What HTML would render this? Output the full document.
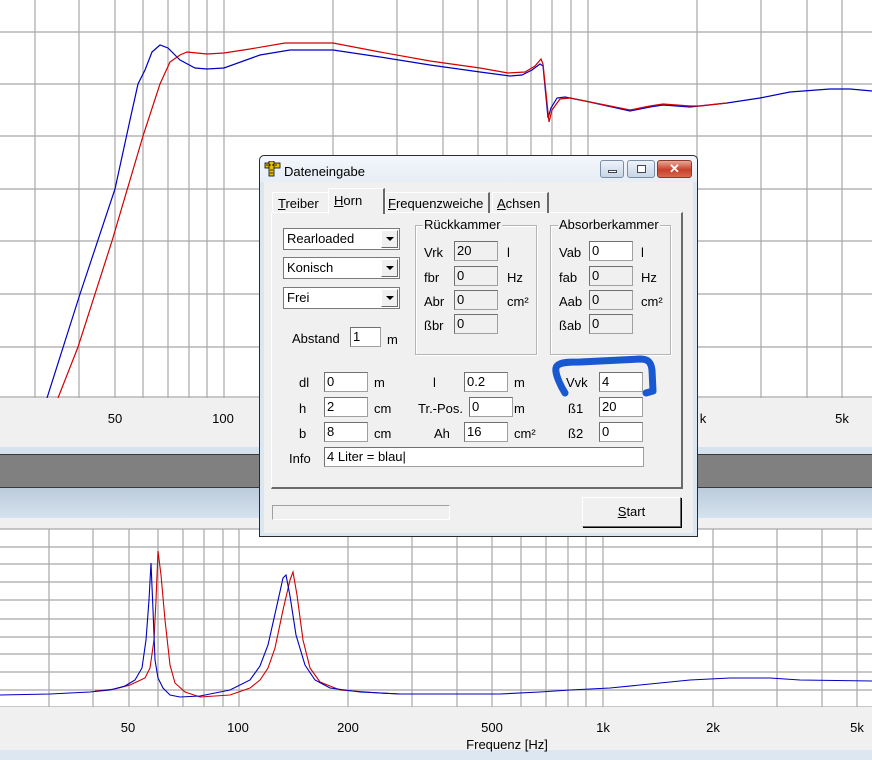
<!DOCTYPE html>
<html><head><meta charset="utf-8"><style>
*{box-sizing:border-box;margin:0;padding:0}
body{width:872px;height:760px;overflow:hidden;position:relative;background:#fff;font-family:"Liberation Sans",sans-serif;font-size:13px;color:#000}
.a{position:absolute}
.lbl{position:absolute;white-space:nowrap;line-height:15px}
.in{position:absolute;height:20px;background:#fff;border:1px solid #a0a0a0;border-top-color:#707070;border-left-color:#707070;font-size:13px;line-height:17px;padding-left:2px}
.g{background:#f0f0f0}
.cb{position:absolute;width:117px;height:22px;background:#fff;border:1px solid #7a7a7a;padding-left:3px;line-height:20px}
.cb .ar{position:absolute;right:1px;top:1px;width:17px;height:18px;background:#f0f0f0;border:1px solid #fff;border-right-color:#696969;border-bottom-color:#696969}
.cb .ar:after{content:"";position:absolute;left:4px;top:6px;border-left:4px solid transparent;border-right:4px solid transparent;border-top:4px solid #000}
.grp{position:absolute;border:1px solid #b5b5b5;box-shadow:inset 1px 1px 0 #fff,1px 1px 0 #fff}
.grp span{position:absolute;top:-9px;left:7px;background:#f0f0f0;padding:0 1px}
u{text-decoration:underline}
</style></head><body>
<svg class="a" style="left:0;top:0" width="872" height="760">
<rect x="0" y="0" width="872" height="398" fill="#fff"/>
<g stroke="#a8a8a8" stroke-width="1.2">
<line x1="0" y1="32" x2="872" y2="32"/><line x1="0" y1="84" x2="872" y2="84"/><line x1="0" y1="136" x2="872" y2="136"/><line x1="0" y1="189" x2="872" y2="189"/><line x1="0" y1="241" x2="872" y2="241"/><line x1="0" y1="294" x2="872" y2="294"/><line x1="0" y1="347" x2="872" y2="347"/><line x1="0" y1="397" x2="872" y2="397"/>
<path d="M35 0V398M79 0V398M115 0V398M143 0V398M168 0V398M189 0V398M207 0V398M224 0V398M333 0V398M397 0V398M443 0V398M478 0V398M507 0V398M531 0V398M552 0V398M571 0V398M588 0V398M697 0V398M761 0V398M807 0V398M842 0V398"/>
</g>
<polyline fill="none" stroke="#0000c0" stroke-width="1.2" points="47,398 80,294 115,189 130,120 138,84 145,70 152,52 160,45 168,48 180,60 195,68 207,69 224,68 260,55 290,50 333,50 380,57 430,65 480,72 510,76 522,75 532,70 540,64 543,66 548,118 551,108 557,98 565,97 585,101 630,111 650,107 663,105 690,107 727,103 760,98 790,92 830,89 850,89 872,91"/>
<polyline fill="none" stroke="#d00000" stroke-width="1.2" points="58,398 78,347 112,241 143,136 160,84 170,62 180,55 187,52 207,54 224,53 250,49 285,43 333,43 380,52 430,61 480,68 508,73 525,72 535,66 541,59 543,64 549,122 552,110 560,99 570,98 585,101 630,110 650,106 663,104 690,106 700,106 727,103"/>
<rect x="0" y="398" width="872" height="49" fill="#f0f0f0"/>
<rect x="0" y="447" width="872" height="7" fill="#d6e2ee"/>
<rect x="0" y="454" width="872" height="34" fill="#808080"/>
<line x1="0" y1="454.5" x2="872" y2="454.5" stroke="#3a3a3a"/><line x1="0" y1="487.5" x2="872" y2="487.5" stroke="#3a3a3a"/>
<defs><linearGradient id="gb" x1="0" y1="0" x2="0" y2="1"><stop offset="0" stop-color="#bccbda"/><stop offset="1" stop-color="#d5e2ef"/></linearGradient></defs>
<rect x="0" y="488" width="872" height="30" fill="url(#gb)"/>
<rect x="0" y="518" width="872" height="12" fill="#f0f0f0"/>
<rect x="0" y="529" width="872" height="178" fill="#fff"/>
<g stroke="#a8a8a8" stroke-width="1.2">
<path d="M0 529H872M0 547H872M0 564H872M0 582H872M0 600H872M0 619H872M0 637H872M0 654H872M0 672H872M0 690H872M0 707H872"/>
<path d="M49 529V707M93 529V707M129 529V707M158 529V707M183 529V707M204 529V707M223 529V707M239 529V707M348 529V707M412 529V707M457 529V707M492 529V707M521 529V707M546 529V707M568 529V707M586 529V707M603 529V707M713 529V707M777 529V707M822 529V707M857 529V707"/>
</g>
<polyline fill="none" stroke="#d00000" stroke-width="1.1" points="95,691 115,689 130,685 145,678 150,668 154,640 156,600 158,551 161,575 165,620 170,665 175,683 185,692 200,697 215,696 230,695 250,688 260,680 268,668 275,648 283,610 290,580 293,572 297,595 303,640 310,668 320,682 340,690 380,693 400,694"/>
<polyline fill="none" stroke="#0000c0" stroke-width="1.1" points="0,695 50,694 90,692 110,690 125,686 135,680 142,668 146,640 149,600 151,563 153,610 155,660 158,678 163,688 170,695 180,697 200,696 230,690 250,680 260,666 268,645 277,605 283,578 286,575 290,596 296,635 305,665 315,680 330,688 360,692 400,694 500,694 540,692 570,690 610,688 650,684 690,680 730,678 770,678 800,680 872,681"/>
<rect x="0" y="707" width="872" height="43" fill="#f0f0f0"/>
<rect x="0" y="750" width="872" height="10" fill="#dde7f1"/>
<g font-family="Liberation Sans" font-size="13" text-anchor="middle" fill="#000">
<text x="115" y="423">50</text><text x="223" y="423">100</text><text x="703" y="423">k</text><text x="842" y="423">5k</text>
<text x="128" y="732">50</text><text x="238" y="732">100</text><text x="348" y="732">200</text><text x="492" y="732">500</text><text x="603" y="732">1k</text><text x="713" y="732">2k</text><text x="857" y="732">5k</text>
<text x="507" y="749">Frequenz [Hz]</text>
</g>
</svg>

<!-- dialog -->
<div class="a" style="left:259px;top:155px;width:439px;height:382px;background:#dae6f2;border:1px solid #2b2b2b;border-radius:5px 5px 0 0"></div>
<div class="a" style="left:260px;top:156px;width:437px;height:26px;background:linear-gradient(#f4f7fb,#e6edf5);border-radius:5px 5px 0 0"></div>
<svg class="a" style="left:264px;top:161px" width="17" height="16"><rect x="1" y="2" width="15" height="5" fill="#e8c000" stroke="#000" stroke-width=".8"/><rect x="5" y="0" width="5" height="15" fill="#e8c000" stroke="#000" stroke-width=".8"/><path d="M3 3v2M6 3v2M9 3v2M12 3v2M6 9h3M6 12h3" stroke="#000" stroke-width=".8"/></svg>
<div class="lbl" style="left:284px;top:164px">Dateneingabe</div>
<div class="a" style="left:600px;top:160px;width:24px;height:18px;border:1px solid #7a8ea5;border-radius:3px;background:linear-gradient(#eef3f9,#c6d5e6)"><div class="a" style="left:7px;top:9px;width:9px;height:3px;border:1px solid #445;background:#fff"></div></div>
<div class="a" style="left:627px;top:160px;width:28px;height:18px;border:1px solid #7a8ea5;border-radius:3px;background:linear-gradient(#eef3f9,#c6d5e6)"><div class="a" style="left:9px;top:4px;width:9px;height:8px;border:1px solid #445;background:#fff"></div></div>
<div class="a" style="left:657px;top:160px;width:35px;height:18px;border:1px solid #8a3a2a;border-radius:3px;background:linear-gradient(#e9a898,#c8402a 55%,#d8684e);color:#fff;font-weight:bold;text-align:center;line-height:16px;font-size:13px">✕</div>
<div class="a" style="left:264px;top:182px;width:429px;height:351px;background:#f0f0f0"></div>

<!-- tabs -->
<div class="a" style="left:271px;top:212px;width:412px;height:277px;border:1px solid #fff;border-right:2px solid #696969;border-bottom:2px solid #696969"></div>
<div class="a" style="left:272px;top:192px;width:56px;height:21px;border-top:1px solid #fff;border-left:1px solid #fff"></div>
<div class="lbl" style="left:278px;top:196px"><u>T</u>reiber</div>
<div class="a" style="left:328px;top:188px;width:57px;height:26px;background:#f0f0f0;border-top:1px solid #fff;border-left:1px solid #fff;border-right:2px solid #696969"></div>
<div class="lbl" style="left:334px;top:193px"><u>H</u>orn</div>
<div class="a" style="left:385px;top:192px;width:105px;height:21px;border-top:1px solid #fff;border-left:1px solid #fff;border-right:2px solid #696969"></div>
<div class="lbl" style="left:388px;top:196px"><u>F</u>requenzweiche</div>
<div class="a" style="left:492px;top:192px;width:57px;height:21px;border-top:1px solid #fff;border-left:1px solid #fff;border-right:2px solid #696969"></div>
<div class="lbl" style="left:497px;top:196px"><u>A</u>chsen</div>

<div class="cb" style="left:283px;top:228px">Rearloaded<div class="ar"></div></div>
<div class="cb" style="left:283px;top:257px">Konisch<div class="ar"></div></div>
<div class="cb" style="left:283px;top:287px">Frei<div class="ar"></div></div>
<div class="lbl" style="left:292px;top:331px">Abstand</div>
<div class="in" style="left:350px;top:327px;width:31px">1</div>
<div class="lbl" style="left:387px;top:332px">m</div>

<div class="grp" style="left:415px;top:225px;width:122px;height:130px"><span>Rückkammer</span></div>
<div class="lbl" style="left:424px;top:245px">Vrk</div><div class="in g" style="left:454px;top:241px;width:44px">20</div><div class="lbl" style="left:507px;top:245px">l</div>
<div class="lbl" style="left:424px;top:270px">fbr</div><div class="in g" style="left:454px;top:266px;width:44px">0</div><div class="lbl" style="left:507px;top:270px">Hz</div>
<div class="lbl" style="left:424px;top:294px">Abr</div><div class="in g" style="left:454px;top:290px;width:44px">0</div><div class="lbl" style="left:507px;top:294px">cm²</div>
<div class="lbl" style="left:424px;top:318px">ßbr</div><div class="in g" style="left:454px;top:314px;width:44px">0</div>

<div class="grp" style="left:550px;top:225px;width:121px;height:130px"><span>Absorberkammer</span></div>
<div class="lbl" style="left:559px;top:245px">Vab</div><div class="in" style="left:589px;top:241px;width:44px">0</div><div class="lbl" style="left:641px;top:245px">l</div>
<div class="lbl" style="left:559px;top:270px">fab</div><div class="in g" style="left:589px;top:266px;width:44px">0</div><div class="lbl" style="left:641px;top:270px">Hz</div>
<div class="lbl" style="left:559px;top:294px">Aab</div><div class="in g" style="left:589px;top:290px;width:44px">0</div><div class="lbl" style="left:641px;top:294px">cm²</div>
<div class="lbl" style="left:559px;top:318px">ßab</div><div class="in g" style="left:589px;top:314px;width:44px">0</div>

<div class="lbl" style="left:299px;top:375px">dl</div><div class="in" style="left:324px;top:372px;width:44px">0</div><div class="lbl" style="left:374px;top:375px">m</div>
<div class="lbl" style="left:433px;top:375px">l</div><div class="in" style="left:464px;top:372px;width:44px">0.2</div><div class="lbl" style="left:514px;top:375px">m</div>
<div class="lbl" style="left:566px;top:375px">Vvk</div><div class="in" style="left:599px;top:372px;width:44px">4</div><div class="lbl" style="left:651px;top:375px">l</div>
<div class="lbl" style="left:299px;top:401px">h</div><div class="in" style="left:324px;top:397px;width:44px">2</div><div class="lbl" style="left:374px;top:401px">cm</div>
<div class="lbl" style="left:418px;top:401px">Tr.-Pos.</div><div class="in" style="left:469px;top:397px;width:44px">0</div><div class="lbl" style="left:514px;top:401px">m</div>
<div class="lbl" style="left:568px;top:401px">ß1</div><div class="in" style="left:599px;top:397px;width:44px">20</div>
<div class="lbl" style="left:299px;top:426px">b</div><div class="in" style="left:324px;top:422px;width:44px">8</div><div class="lbl" style="left:374px;top:426px">cm</div>
<div class="lbl" style="left:434px;top:426px">Ah</div><div class="in" style="left:464px;top:422px;width:44px">16</div><div class="lbl" style="left:514px;top:426px">cm²</div>
<div class="lbl" style="left:568px;top:426px">ß2</div><div class="in" style="left:599px;top:422px;width:44px">0</div>
<div class="lbl" style="left:289px;top:451px">Info</div><div class="in" style="left:324px;top:447px;width:320px">4 Liter = blau|</div>

<div class="a" style="left:272px;top:505px;width:178px;height:15px;border:1px solid #fff;border-top-color:#a0a0a0;border-left-color:#a0a0a0"></div>
<div class="a" style="left:582px;top:497px;width:99px;height:30px;border:1px solid #fff;border-right-color:#696969;border-bottom-color:#696969;box-shadow:1px 1px 0 #000;text-align:center;line-height:28px"><u>S</u>tart</div>

<svg class="a" style="left:0;top:0;pointer-events:none" width="872" height="760"><path d="M565 393 C560 385 553 370 557 366 C560 362 570 362 580 362 L640 359 C648 359 651 362 652 370 L653 391 L646 393" fill="none" stroke="#1858d0" stroke-width="7" stroke-linecap="round" stroke-linejoin="round"/></svg>
</body></html>
